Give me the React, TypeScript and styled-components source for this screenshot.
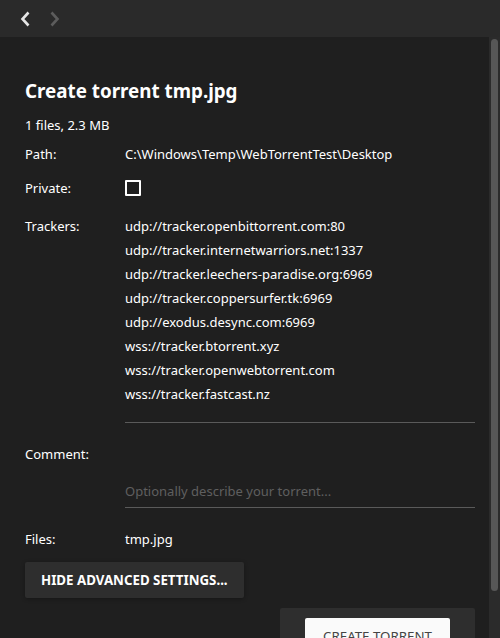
import React from 'react'
import styled, { createGlobalStyle } from 'styled-components'

const GlobalStyle = createGlobalStyle`
  html, body {
    margin: 0;
    padding: 0;
    background: #1f1f1f;
    overflow: hidden;
  }
  body {
    font-family: 'Noto Sans', 'Open Sans', sans-serif;
    color: #fff;
  }
`

const trackers = [
  'udp://tracker.openbittorrent.com:80',
  'udp://tracker.internetwarriors.net:1337',
  'udp://tracker.leechers-paradise.org:6969',
  'udp://tracker.coppersurfer.tk:6969',
  'udp://exodus.desync.com:6969',
  'wss://tracker.btorrent.xyz',
  'wss://tracker.openwebtorrent.com',
  'wss://tracker.fastcast.nz',
]

const App = () => {
  return (
    <>
      <GlobalStyle />
      <Window>
        <Header>
          <NavButton aria-label='back'>
            <svg width='12' height='16' viewBox='0 0 12 16'>
              <path d='M9.5 1.5 L3.5 8 L9.5 14.5' fill='none' stroke='currentColor' strokeWidth='2.6' />
            </svg>
          </NavButton>
          <NavButton aria-label='forward' disabled>
            <svg width='12' height='16' viewBox='0 0 12 16'>
              <path d='M2.5 1.5 L8.5 8 L2.5 14.5' fill='none' stroke='currentColor' strokeWidth='2.6' />
            </svg>
          </NavButton>
        </Header>
        <Body>
          <Content>
            <Title>Create torrent tmp.jpg</Title>
            <Summary>1 files, 2.3 MB</Summary>
            <Row $top={9}>
              <Label>Path:</Label>
              <Value>C:\Windows\Temp\WebTorrentTest\Desktop</Value>
            </Row>
            <Row $top={14} $align='center'>
              <Label>Private:</Label>
              <Checkbox />
            </Row>
            <Row $top={18}>
              <Label>Trackers:</Label>
              <Field>
                <TrackerList>
                  {trackers.map(t => <Tracker key={t}>{t}</Tracker>)}
                </TrackerList>
              </Field>
            </Row>
            <Row $top={21}>
              <Label>Comment:</Label>
              <Field>
                <CommentInput placeholder='Optionally describe your torrent...' />
              </Field>
            </Row>
            <Row $top={21}>
              <Label>Files:</Label>
              <Value>tmp.jpg</Value>
            </Row>
            <AdvancedButton>Hide advanced settings...</AdvancedButton>
            <Footer>
              <FooterPanel>
                <CreateButton>Create torrent</CreateButton>
              </FooterPanel>
            </Footer>
          </Content>
          <ScrollTrack>
            <ScrollThumb />
          </ScrollTrack>
        </Body>
      </Window>
    </>
  )
}

export default App

const Window = styled.div`
  width: 500px;
  height: 638px;
  display: flex;
  flex-direction: column;
  background: #1f1f1f;
`

const Header = styled.header`
  height: 37px;
  flex-shrink: 0;
  background: #2a2a2a;
  display: flex;
  align-items: center;
  padding-left: 18px;
  gap: 16px;
`

const NavButton = styled.button`
  background: none;
  border: none;
  padding: 0 1px;
  display: flex;
  align-items: center;
  color: ${({ disabled }) => disabled ? '#5c5c5c' : '#e6e6e6'};
`

const Body = styled.div`
  flex: 1;
  min-height: 0;
  display: flex;
`

const Content = styled.main`
  flex: 1;
  min-width: 0;
  overflow: hidden;
  padding: 40px 14px 0 25px;
`

const ScrollTrack = styled.div`
  width: 11px;
  flex-shrink: 0;
  box-sizing: border-box;
  padding: 2px 2px 0;
  background: #2b2b2b;
`

const ScrollThumb = styled.div`
  height: 552px;
  border-radius: 4px;
  background: #575757;
`

const Title = styled.h1`
  margin: 0;
  font-size: 18.8px;
  font-weight: 700;
  line-height: 28px;
`

const Summary = styled.div`
  margin-top: 10px;
  font-size: 13px;
  line-height: 20px;
`

interface RowProps {
  $top: number
  $align?: string
}

const Row = styled.div<RowProps>`
  display: flex;
  align-items: ${({ $align }) => $align || 'flex-start'};
  margin-top: ${({ $top }) => $top}px;
  font-size: 13px;
  line-height: 20px;
`

const Label = styled.div`
  width: 100px;
  flex-shrink: 0;
`

const Value = styled.div``

const Field = styled.div`
  flex: 1;
`

const Checkbox = styled.div`
  width: 12px;
  height: 12px;
  border: 2px solid #fff;
  border-radius: 1px;
`

const TrackerList = styled.div`
  border-bottom: 1px solid #5a5a5a;
  padding-bottom: 16px;
  margin-top: -2px;
`

const Tracker = styled.div`
  line-height: 24px;
`

const CommentInput = styled.input`
  display: block;
  width: 100%;
  box-sizing: content-box;
  height: 20px;
  margin-top: 31px;
  background: transparent;
  border: none;
  border-bottom: 1px solid #5a5a5a;
  padding: 6px 0 6px;
  font-family: inherit;
  font-size: 13px;
  line-height: 20px;
  color: #fff;
  outline: none;

  &::placeholder {
    color: #5f5f5f;
  }
`

const AdvancedButton = styled.button`
  display: block;
  margin-top: 13px;
  height: 36px;
  padding: 0 16px;
  background: #2e2e2e;
  border: none;
  border-radius: 2px;
  color: #fff;
  font-family: inherit;
  font-size: 13.3px;
  font-weight: 700;
  text-transform: uppercase;
  box-shadow: 0 1px 4px rgba(0, 0, 0, 0.3);
`

const Footer = styled.div`
  display: flex;
  justify-content: flex-end;
  margin-top: 10px;
`

const FooterPanel = styled.div`
  width: 195px;
  padding: 10px 25px 10px;
  box-sizing: border-box;
  background: #2e2e2e;
  border-radius: 2px;
`

const CreateButton = styled.button`
  display: block;
  width: 145px;
  height: 36px;
  background: #fafafa;
  border: none;
  border-radius: 2px;
  color: #444;
  font-family: inherit;
  font-size: 13.3px;
  text-transform: uppercase;
`
